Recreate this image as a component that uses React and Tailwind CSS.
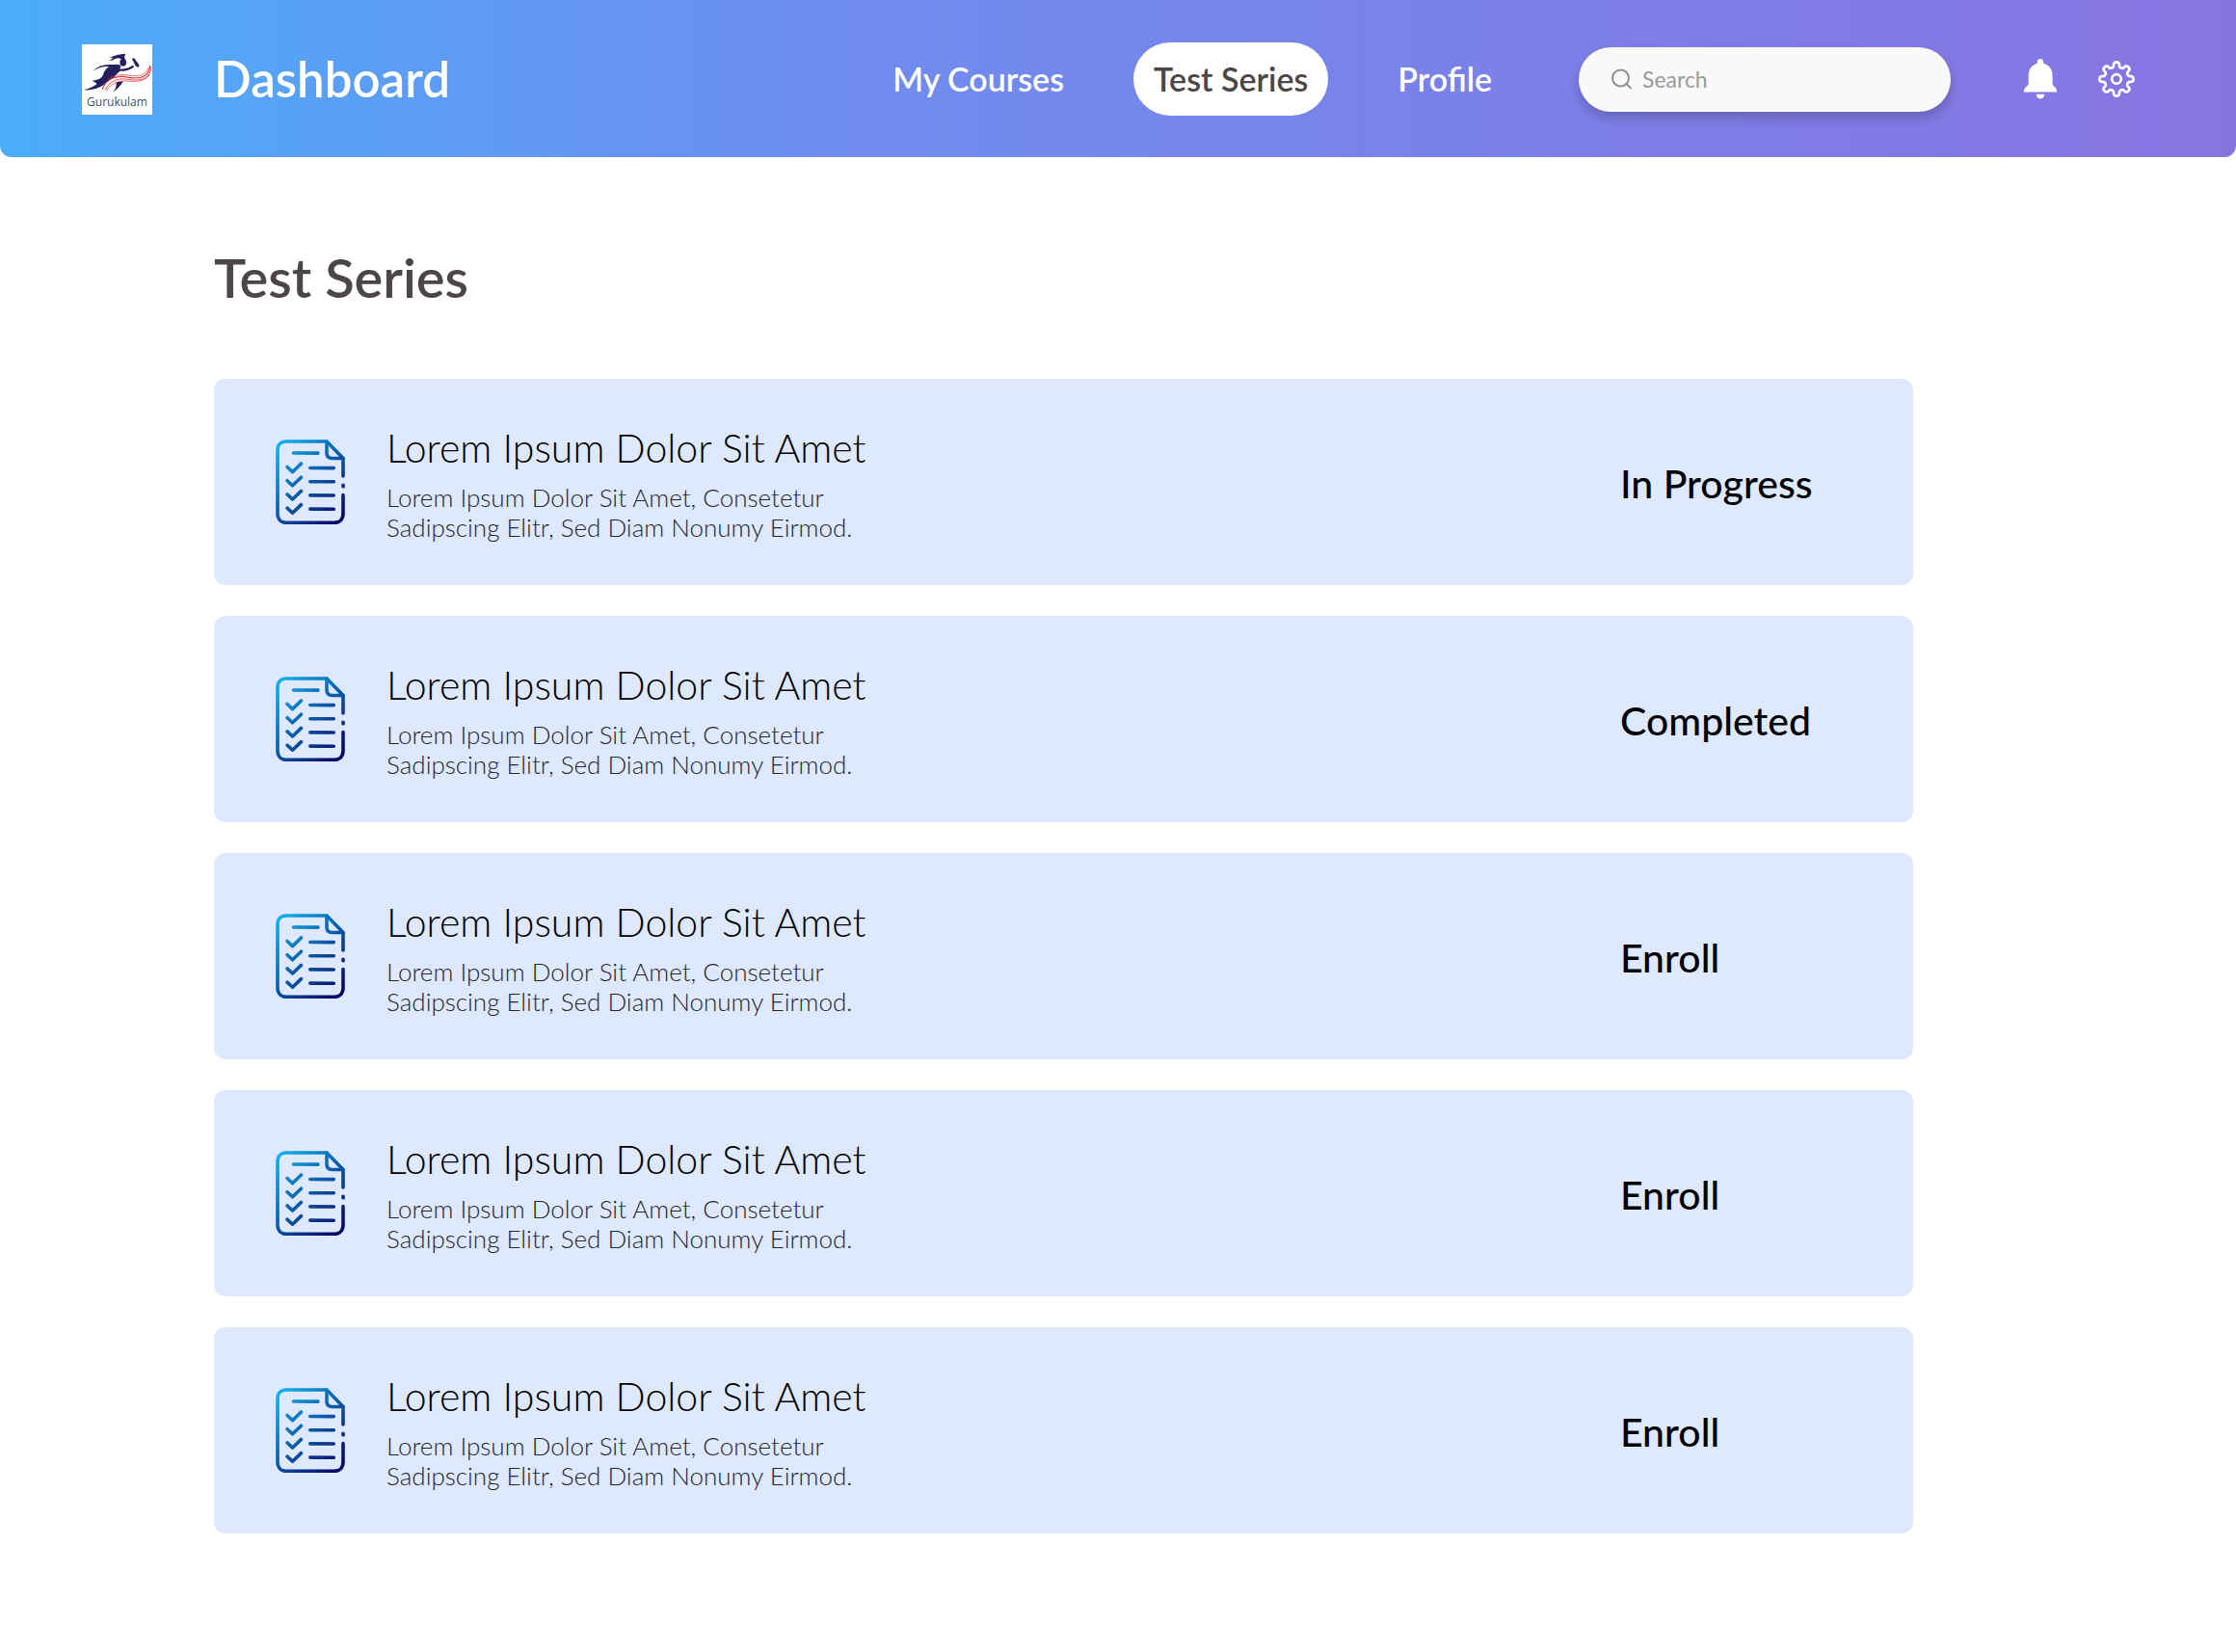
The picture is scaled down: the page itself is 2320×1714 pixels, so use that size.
import React from "react";

const tests = [
  { title: "Lorem Ipsum Dolor Sit Amet", status: "In Progress" },
  { title: "Lorem Ipsum Dolor Sit Amet", status: "Completed" },
  { title: "Lorem Ipsum Dolor Sit Amet", status: "Enroll" },
  { title: "Lorem Ipsum Dolor Sit Amet", status: "Enroll" },
  { title: "Lorem Ipsum Dolor Sit Amet", status: "Enroll" },
];

function Logo() {
  return (
    <a href="#home" className="flex h-[73px] w-[73px] shrink-0 flex-col items-center bg-white">
      <svg viewBox="45 45 219 159" className="block h-[53px] w-[73px] shrink-0" aria-hidden="true">
        <g fill="#241f5e">
          <path d="M132 86 Q154 75 181 74 L177 84 Q180 90 178 96 Q162 84 148 90 Q140 98 129 93 Q138 94 142 88 Z" />
          <ellipse cx="173" cy="101" rx="10" ry="12" />
          <path d="M79 129 Q100 103 150 109 L146 117 Q108 108 79 129 Z" />
          <path d="M130 114 Q148 104 162 109 Q170 114 162 121 Q182 124 203 110 L208 115 Q188 131 164 128 Q152 136 146 148 Q124 158 112 172 Q86 190 50 187 Q76 181 92 168 Q84 160 77 158 Q104 157 110 142 Q116 122 130 114 Z" />
          <path d="M152 163 Q154 180 142 194 Q160 182 174 160 Z" />
          <path d="M201 91 L207 87 L214 97 L224 110 L220 117 L212 112 Z" />
        </g>
        <g fill="none" stroke="#dc3237" strokeLinecap="round">
          <path d="M109 184 C122 150 156 140 190 148 C225 154 254 148 257 112" strokeWidth="3.500" />
          <path d="M118 186 C134 156 160 148 192 155 C230 160 260 150 261 116" strokeWidth="2.500" />
          <path d="M121 190 C138 162 164 156 194 160 C222 162 246 158 256 138" strokeWidth="2" />
          <path d="M128 152 C150 138 170 138 192 142 C220 146 246 142 252 118" strokeWidth="2" />
        </g>
      </svg>
      <span className="font-['Open_Sans'] text-[12px] leading-[14px] text-[#35546a]">Gurukulam</span>
    </a>
  );
}

function BellIcon() {
  return (
    <svg viewBox="0 0 34 42" className="block h-[42px] w-[34px]" fill="#fff" aria-hidden="true">
      <path d="M17 0 C19 0 20.200 1.500 20.200 3.600 L20.200 4.800 C26 6.200 29.600 11 29.600 17.500 L29.600 25.500 C29.600 28.500 34 29.500 34 33 L34 34.600 L0 34.600 L0 33 C0 29.500 4.700 28.500 4.700 25.500 L4.700 17.500 C4.700 11 8.200 6.200 13.800 4.800 L13.800 3.600 C13.800 1.500 15 0 17 0 Z" />
      <path d="M12.800 36.800 L21.300 36.800 C21.300 39.600 19.600 41.400 17 41.400 C14.500 41.400 12.800 39.600 12.800 36.800 Z" />
    </svg>
  );
}

const gearPath =
  Array.from({ length: 144 }, (_, i) => {
    const a = (i / 144) * Math.PI * 2;
    const t = a + 0.045 * Math.sin(16 * a);
    const r = 15 + 2.600 * Math.cos(8 * a);
    return `${i ? "L" : "M"}${(20 + r * Math.cos(t)).toFixed(2)} ${(20 + r * Math.sin(t)).toFixed(2)}`;
  }).join(" ") + " Z";

function GearIcon() {
  return (
    <svg viewBox="0 0 40 40" className="block h-10 w-10" fill="none" stroke="#fff" strokeWidth="2.700" strokeLinejoin="round" aria-hidden="true">
      <path d={gearPath} />
      <circle cx="20" cy="20" r="4.800" />
    </svg>
  );
}

function SearchIcon() {
  return (
    <svg viewBox="0 0 22 22" className="block h-[22px] w-[22px] shrink-0" fill="none" stroke="#8f8f8f" strokeWidth="2" strokeLinecap="round" aria-hidden="true">
      <circle cx="9.500" cy="10" r="8.500" />
      <path d="M15.800 16.200 L20 20.400" />
    </svg>
  );
}

function ChecklistIcon() {
  const rows = [0, 14.2, 28.4, 42.6];
  return (
    <svg viewBox="0 0 72 88" className="block h-[88px] w-[72px] shrink-0" aria-hidden="true">
      <defs>
        <linearGradient id="sheet" gradientUnits="userSpaceOnUse" x1="-2" y1="8" x2="72" y2="82">
          <stop offset="0" stopColor="#10b4ee" />
          <stop offset="1" stopColor="#07005f" />
        </linearGradient>
      </defs>
      <g fill="none" stroke="url(#sheet)" strokeWidth="3.600" strokeLinecap="round" strokeLinejoin="round">
        <path d="M70 38 L70 19.500 L53 2 L11 2 C5.500 2 2 5.500 2 11 L2 77 C2 82.500 5.500 86.200 11 86.200 L61 86.200 C66.500 86.200 70 82.500 70 77 L70 57.500" />
        <path d="M53 2 L53 14 C53 17.500 55 19.500 58.500 19.500 L70 19.500" />
        <path d="M70 47.200 L70.100 48.800" />
        <path d="M18.500 14 L44 14.100" />
        {rows.map((y) => (
          <path key={y} d={`M12 ${28.5 + y} L17.500 ${33.6 + y} L26.500 ${25 + y} M35.800 ${29.5 + y} L60.300 ${29.6 + y}`} />
        ))}
      </g>
    </svg>
  );
}

function Header() {
  return (
    <header className="flex h-[163px] items-center rounded-b-xl bg-[linear-gradient(90deg,#4badfa_0%,#6f8cee_38%,#8874e1_100%)] pt-px pr-[104px] pl-[85px] text-white">
      <Logo />
      <span className="ml-[64px] text-[51px] leading-[64px] font-semibold">Dashboard</span>
      <nav className="ml-auto flex items-center gap-[51px] text-[34px] leading-[42px] font-semibold">
        <a href="#courses" className="px-[21px]">My Courses</a>
        <a href="#tests" aria-current="page" className="rounded-full bg-white px-[21px] py-[17px] text-[#4d4646]">Test Series</a>
        <a href="#profile" className="px-[21px]">Profile</a>
      </nav>
      <label className="ml-[69px] flex h-[67px] w-[386px] items-center gap-[10px] rounded-full bg-[#f9f9f9] px-[34px] shadow-[0_6px_12px_rgba(0,0,0,0.2)]">
        <SearchIcon />
        <input type="search" aria-label="Search" placeholder="Search" className="w-full min-w-0 bg-transparent text-[23px] leading-[28px] text-[#4d4646] outline-none placeholder:text-[#9a9a9a]" />
      </label>
      <button type="button" aria-label="Notifications" className="ml-[76px]">
        <BellIcon />
      </button>
      <button type="button" aria-label="Settings" className="ml-[42px]">
        <GearIcon />
      </button>
    </header>
  );
}

function TestCard({ title, status }) {
  return (
    <li className="flex h-[214px] items-center rounded-xl bg-[#dee8ff] pl-[64px] text-black">
      <ChecklistIcon />
      <div className="ml-[43px] pt-[3px]">
        <h2 className="text-[41px] leading-[48px] font-light">{title}</h2>
        <p className="mt-[12px] text-[26px] leading-[31px] font-light text-[#23262e]">
          Lorem Ipsum Dolor Sit Amet, Consetetur
          <br />
          Sadipscing Elitr, Sed Diam Nonumy Eirmod.
        </p>
      </div>
      <button type="button" className="ml-auto w-[304px] pt-[3px] text-left text-[41px] leading-[48px] font-medium">{status}</button>
    </li>
  );
}

export default function App() {
  return (
    <div className="min-h-screen bg-white font-['Lato','Open_Sans',sans-serif]">
      <Header />
      <main className="pt-[90px] pr-[335px] pb-16 pl-[222px]">
        <h1 className="text-[56px] leading-[70px] font-semibold text-[#4d4646]">Test Series</h1>
        <ul className="mt-[70px] flex flex-col gap-8">
          {tests.map((test, i) => (
            <TestCard key={i} {...test} />
          ))}
        </ul>
      </main>
    </div>
  );
}
